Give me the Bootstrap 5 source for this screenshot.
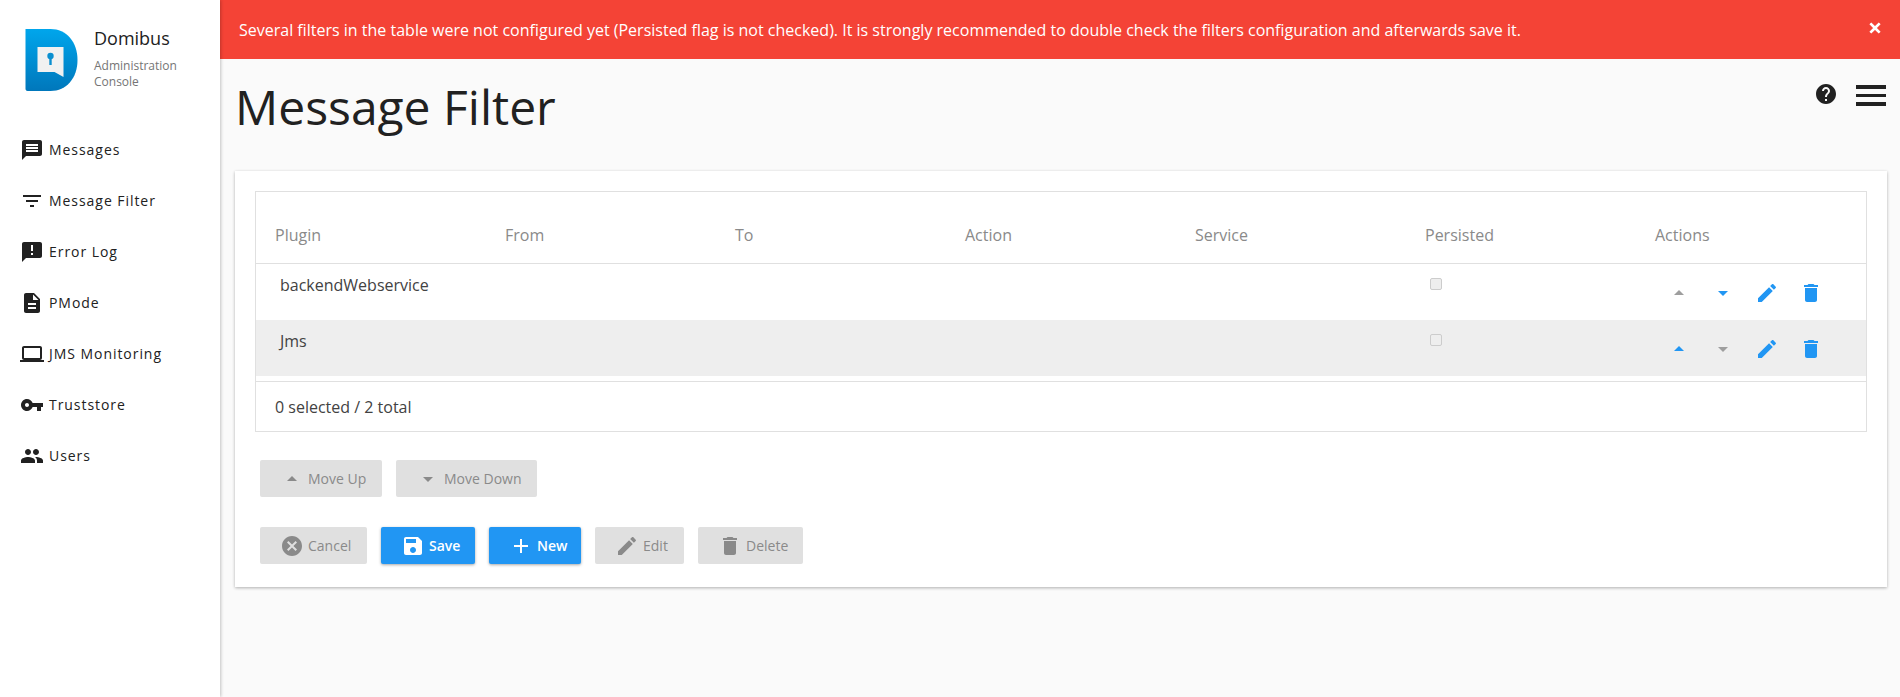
<!DOCTYPE html>
<html lang="en">
<head>
  <meta charset="UTF-8">
  <meta name="viewport" content="width=device-width, initial-scale=1.0">
  <title>Message Filter</title>
  <link rel="stylesheet" href="https://cdn.jsdelivr.net/npm/bootstrap@5.3.0/dist/css/bootstrap.min.css">
  <style>
    body { font-family: "Open Sans", "Noto Sans", sans-serif; font-size: 16px; background: #fafafa; color: #212121; overflow: hidden; }
    .app-shell { min-height: 697px; }
    .side-bar { width: 220px; flex: none; background: #fff; box-shadow: 1px 0 3px rgba(0,0,0,.22); z-index: 2; }
    .brand-box { padding: 28px 0 0 24px; height: 124px; gap: 15px; }
    .brand-name { font-size: 18px; line-height: 20px; }
    .brand-sub { font-size: 12px; line-height: 16px; color: #757575; margin-top: 10px; }
    .side-link { height: 51px; padding-left: 20px; color: #212121; text-decoration: none; letter-spacing: .95px; font-size: 14px; gap: 5px; }
    .side-link svg { width: 24px; height: 24px; fill: #212121; flex: none; }
    .alert-strip { height: 59px; background: #f44336; color: #fff; padding: 0 19px; font-size: 16px; }
    .alert-strip svg { width: 16px; height: 16px; fill: #fff; stroke: #fff; stroke-width: 2; margin-top: -3px; }
    .page-title { font-size: 48px; font-weight: 400; line-height: 65px; margin: 5px 0 0; color: #212121; }
    .title-row { height: 112px; padding: 10px 16px 0 15px; }
    .help-icon { width: 24px; height: 24px; fill: #212121; margin-top: 13px; margin-right: 18px; }
    .menu-bars { width: 30px; margin-top: 16px; gap: 5px; }
    .menu-bars span { height: 3.5px; background: #212121; display: block; }
    .panel-box { margin: 0 15px; height: 416px; background: #fff; box-shadow: 0 1px 3px rgba(0,0,0,.3); padding: 20px; }
    .grid-box { border: 1px solid #e0e0e0; height: 241px; overflow: hidden; }
    .filter-grid { table-layout: fixed; width: 1610px; margin: 0; border-collapse: separate; border-spacing: 0; }
    .filter-grid th { font-weight: 400; color: #8a8a8a; height: 72px; padding: 0 0 18px 19px; vertical-align: bottom; border-bottom: 1px solid #e0e0e0; background: transparent; font-size: 16px; line-height: 20px; }
    .filter-grid td { height: 56px; padding: 11px 0 0 24px; vertical-align: top; border: 0; background: transparent; color: #424242; font-size: 16px; line-height: 20px; }
    .filter-grid tr.row-picked td { background: #eeeeee; }
    .filter-grid td.cell-check { padding-left: 24px; padding-top: 8px; }
    .filter-grid td.cell-actions { padding: 17px 0 0 21px; }
    .filter-grid input.form-check-input:disabled { width: 12px; height: 12px; background: #eee; border: 1px solid #ccc; border-radius: 2px; margin: 6px 0 0; opacity: 1; display: block; }
    .act-icon { width: 44px; height: 24px; display: block; flex: none; text-align: center; }
    .act-icon svg { width: 24px; height: 24px; display: block; margin: 0 auto; }
    .tone-blue { fill: #2196f3; }
    .tone-grey { fill: #9e9e9e; }
    .grid-foot { border-top: 1px solid #e0e0e0; margin-top: 5px; height: 51px; padding-left: 19px; color: #424242; font-size: 16px; }
    .btn-row { gap: 14px; padding-left: 5px; }
    .btn-next { margin-top: 30px; }
    .btn-mat { height: 37px; border: 0; border-radius: 2px; font-size: 14px; padding: 0 0 0 20px; display: flex; align-items: center; gap: 4px; }
    .btn-mat svg { width: 24px; height: 24px; flex: none; }
    .btn-mat:disabled { background: #e0e0e0; color: #8a8a8a; opacity: 1; }
    .btn-mat:disabled svg { fill: #8a8a8a; }
    .btn-live { background: #2196f3; color: #fff; font-weight: 600; box-shadow: 0 1px 3px rgba(0,0,0,.35); }
    .btn-live svg { fill: #fff; }
    .w-up { width: 122px; } .w-down { width: 141px; } .w-cancel { width: 107px; } .w-save { width: 94px; }
    .w-new { width: 92px; } .w-edit { width: 89px; } .w-delete { width: 105px; }
  </style>
</head>
<body>
  <svg width="0" height="0" class="position-absolute">
    <symbol id="ic-up" viewBox="0 0 24 24"><path d="M7 14l5-5 5 5z"/></symbol>
    <symbol id="ic-down" viewBox="0 0 24 24"><path d="M7 10l5 5 5-5z"/></symbol>
    <symbol id="ic-edit" viewBox="0 0 24 24"><path d="M3 17.25V21h3.75L17.81 9.94l-3.75-3.75L3 17.25zM20.71 7.04c.39-.39.39-1.02 0-1.41l-2.34-2.34c-.39-.39-1.02-.39-1.41 0l-1.83 1.83 3.75 3.75 1.83-1.83z"/></symbol>
    <symbol id="ic-del" viewBox="0 0 24 24"><path d="M6 19c0 1.1.9 2 2 2h8c1.1 0 2-.9 2-2V7H6v12zM19 4h-3.5l-1-1h-5l-1 1H5v2h14V4z"/></symbol>
  </svg>

  <div class="app-shell d-flex">
    <aside class="side-bar">
      <div class="brand-box d-flex">
        <svg width="55" height="64" viewBox="0 0 54 64" class="flex-none">
          <defs>
            <linearGradient id="logoFill" x1="0" y1="0" x2="0" y2="1">
              <stop offset="0" stop-color="#00a6ec"/>
              <stop offset="1" stop-color="#0077bb"/>
            </linearGradient>
          </defs>
          <path d="M1 1h25c16 0 27 13 27 31S42 63 26 63H3c-1 0-2-1-2-2z" fill="url(#logoFill)"/>
          <path d="M13 19h26v30l-9-5H13z" fill="#f1f1f1"/>
          <circle cx="26" cy="28" r="3.2" fill="#0a8fd0"/>
          <rect x="24.8" y="29" width="2.4" height="8" fill="#0a8fd0"/>
        </svg>
        <div>
          <div class="brand-name">Domibus</div>
          <div class="brand-sub">Administration<br>Console</div>
        </div>
      </div>
      <nav class="nav flex-column">
        <a class="side-link d-flex align-items-center" href="#"><svg viewBox="0 0 24 24"><path d="M20 2H4c-1.1 0-1.99.9-1.99 2L2 22l4-4h14c1.1 0 2-.9 2-2V4c0-1.1-.9-2-2-2zm-2 12H6v-2h12v2zm0-3H6V9h12v2zm0-3H6V6h12v2z"/></svg>Messages</a>
        <a class="side-link d-flex align-items-center" href="#"><svg viewBox="0 0 24 24"><path d="M10 18h4v-2h-4v2zM3 6v2h18V6H3zm3 7h12v-2H6v2z"/></svg>Message Filter</a>
        <a class="side-link d-flex align-items-center" href="#"><svg viewBox="0 0 24 24"><path d="M20 2H4c-1.1 0-1.99.9-1.99 2L2 22l4-4h14c1.1 0 2-.9 2-2V4c0-1.1-.9-2-2-2zm-7 9h-2V5h2v6zm0 4h-2v-2h2v2z"/></svg>Error Log</a>
        <a class="side-link d-flex align-items-center" href="#"><svg viewBox="0 0 24 24"><path d="M14 2H6c-1.1 0-1.99.9-1.99 2L4 20c0 1.1.89 2 1.99 2H18c1.1 0 2-.9 2-2V8l-6-6zm2 16H8v-2h8v2zm0-4H8v-2h8v2zm-3-5V3.5L18.5 9H13z"/></svg>PMode</a>
        <a class="side-link d-flex align-items-center" href="#"><svg viewBox="0 0 24 24"><path d="M20 18c1.1 0 1.99-.9 1.99-2L22 6c0-1.1-.9-2-2-2H4c-1.1 0-2 .9-2 2v10c0 1.1.9 2 2 2H0v2h24v-2h-4zM4 6h16v10H4V6z"/></svg>JMS Monitoring</a>
        <a class="side-link d-flex align-items-center" href="#"><svg viewBox="0 0 24 24"><path d="M12.65 10C11.83 7.67 9.61 6 7 6c-3.31 0-6 2.69-6 6s2.69 6 6 6c2.61 0 4.83-1.67 5.65-4H17v4h4v-4h2v-4H12.65zM7 14c-1.1 0-2-.9-2-2s.9-2 2-2 2 .9 2 2-.9 2-2 2z"/></svg>Truststore</a>
        <a class="side-link d-flex align-items-center" href="#"><svg viewBox="0 0 24 24"><path d="M16 11c1.66 0 2.99-1.34 2.99-3S17.66 5 16 5c-1.66 0-3 1.34-3 3s1.34 3 3 3zm-8 0c1.66 0 2.99-1.34 2.99-3S9.66 5 8 5C6.34 5 5 6.34 5 8s1.34 3 3 3zm0 2c-2.33 0-7 1.17-7 3.5V19h14v-2.5c0-2.33-4.67-3.5-7-3.5zm8 0c-.29 0-.62.02-.97.05 1.16.84 1.97 1.97 1.97 3.45V19h6v-2.5c0-2.33-4.67-3.5-7-3.5z"/></svg>Users</a>
      </nav>
    </aside>

    <main class="flex-grow-1">
      <div class="alert-strip d-flex align-items-center justify-content-between">
        <span>Several filters in the table were not configured yet (Persisted flag is not checked). It is strongly recommended to double check the filters configuration and afterwards save it.</span>
        <svg viewBox="0 0 24 24"><path d="M19 6.41L17.59 5 12 10.59 6.41 5 5 6.41 10.59 12 5 17.59 6.41 19 12 13.41 17.59 19 19 17.59 13.41 12z"/></svg>
      </div>

      <div class="title-row d-flex justify-content-between align-items-start">
        <h1 class="page-title">Message Filter</h1>
        <div class="d-flex align-items-start">
          <svg class="help-icon" viewBox="0 0 24 24"><path d="M12 2C6.48 2 2 6.48 2 12s4.48 10 10 10 10-4.48 10-10S17.52 2 12 2zm1 17h-2v-2h2v2zm2.07-7.75l-.9.92C13.45 12.9 13 13.5 13 15h-2v-.5c0-1.1.45-2.1 1.17-2.83l1.24-1.26c.37-.36.59-.86.59-1.41 0-1.1-.9-2-2-2s-2 .9-2 2H8c0-2.21 1.79-4 4-4s4 1.79 4 4c0 .88-.36 1.68-.93 2.25z"/></svg>
          <div class="menu-bars d-flex flex-column"><span></span><span></span><span></span></div>
        </div>
      </div>

      <section class="panel-box">
        <div class="grid-box">
          <table class="table filter-grid">
            <thead>
              <tr><th>Plugin</th><th>From</th><th>To</th><th>Action</th><th>Service</th><th>Persisted</th><th>Actions</th></tr>
            </thead>
            <tbody>
              <tr>
                <td>backendWebservice</td><td></td><td></td><td></td><td></td>
                <td class="cell-check"><input type="checkbox" class="form-check-input" disabled></td>
                <td class="cell-actions"><div class="d-flex">
                  <span class="act-icon"><svg class="tone-grey"><use href="#ic-up"/></svg></span>
                  <span class="act-icon"><svg class="tone-blue"><use href="#ic-down"/></svg></span>
                  <span class="act-icon"><svg class="tone-blue"><use href="#ic-edit"/></svg></span>
                  <span class="act-icon"><svg class="tone-blue"><use href="#ic-del"/></svg></span>
                </div></td>
              </tr>
              <tr class="row-picked">
                <td>Jms</td><td></td><td></td><td></td><td></td>
                <td class="cell-check"><input type="checkbox" class="form-check-input" disabled></td>
                <td class="cell-actions"><div class="d-flex">
                  <span class="act-icon"><svg class="tone-blue"><use href="#ic-up"/></svg></span>
                  <span class="act-icon"><svg class="tone-grey"><use href="#ic-down"/></svg></span>
                  <span class="act-icon"><svg class="tone-blue"><use href="#ic-edit"/></svg></span>
                  <span class="act-icon"><svg class="tone-blue"><use href="#ic-del"/></svg></span>
                </div></td>
              </tr>
            </tbody>
          </table>
          <div class="grid-foot d-flex align-items-center">0 selected / 2 total</div>
        </div>

        <div class="btn-row d-flex mt-4 pt-1">
          <button class="btn btn-mat w-up" disabled><svg><use href="#ic-up"/></svg>Move Up</button>
          <button class="btn btn-mat w-down" disabled><svg><use href="#ic-down"/></svg>Move Down</button>
        </div>
        <div class="btn-row d-flex btn-next">
          <button class="btn btn-mat w-cancel" disabled><svg viewBox="0 0 24 24"><path d="M12 2C6.47 2 2 6.47 2 12s4.47 10 10 10 10-4.47 10-10S17.53 2 12 2zm5 13.59L15.59 17 12 13.41 8.41 17 7 15.59 10.59 12 7 8.41 8.41 7 12 10.59 15.59 7 17 8.41 13.41 12 17 15.59z"/></svg>Cancel</button>
          <button class="btn btn-mat btn-live w-save"><svg viewBox="0 0 24 24"><path d="M17 3H5c-1.11 0-2 .9-2 2v14c0 1.1.89 2 2 2h14c1.1 0 2-.9 2-2V7l-4-4zm-5 16c-1.66 0-3-1.34-3-3s1.34-3 3-3 3 1.34 3 3-1.34 3-3 3zm3-10H5V5h10v4z"/></svg>Save</button>
          <button class="btn btn-mat btn-live w-new"><svg viewBox="0 0 24 24"><path d="M19 13h-6v6h-2v-6H5v-2h6V5h2v6h6v2z"/></svg>New</button>
          <button class="btn btn-mat w-edit" disabled><svg><use href="#ic-edit"/></svg>Edit</button>
          <button class="btn btn-mat w-delete" disabled><svg><use href="#ic-del"/></svg>Delete</button>
        </div>
      </section>
    </main>
  </div>
</body>
</html>
